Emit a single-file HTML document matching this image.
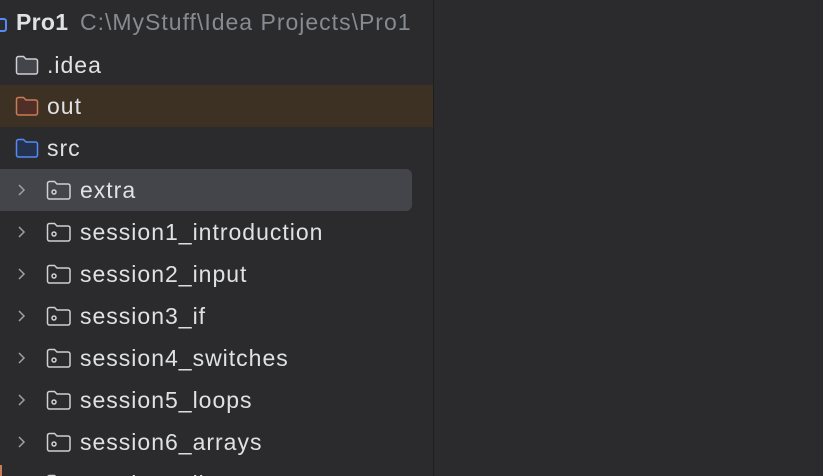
<!DOCTYPE html>
<html><head><meta charset="utf-8"><style>
html,body{margin:0;width:823px;height:476px;overflow:hidden}
body{background:#2b2b2d;font-family:"Liberation Sans",sans-serif;position:relative}
#wrap{position:absolute;left:0;top:0;width:823px;height:476px;overflow:hidden}
.div{position:absolute;left:433px;top:0;width:1px;height:476px;background:#1e1f22}
.row{position:absolute;left:0;width:433px;height:42px;color:#dfe1e5;font-size:23px;line-height:42px;letter-spacing:1px}
.row span.t{position:absolute;top:0;white-space:nowrap}
svg{position:absolute}
.sel{position:absolute;left:0;top:169px;width:412px;height:42px;background:#43454a;border-radius:0 6px 6px 0}
</style></head><body><div id="wrap">
<div class="div"></div>
<div class="row" style="top:1px;height:42px"><svg style="left:-4px;top:12px" width="14" height="24" viewBox="0 0 14 24"><rect x="0" y="6" width="10" height="12" rx="2" fill="none" stroke="#548af7" stroke-width="2"/></svg><span class="t" style="left:16px;font-weight:bold;letter-spacing:0.3px">Pro1</span><span class="t" style="left:80px;color:#868a91">C:\MyStuff\Idea Projects\Pro1</span></div>
<div class="row" style="top:44px"><svg style="left:15px;top:10px" width="24" height="22" viewBox="0 0 24 22"><path d="M1.5 4.5a2 2 0 0 1 2-2h5l2.5 2.5h9.5a2 2 0 0 1 2 2v11a2 2 0 0 1-2 2h-17a2 2 0 0 1-2-2z" fill="#43454a" stroke="#ced0d6" stroke-width="1.5"/></svg><span class="t" style="left:47px">.idea</span></div>
<div class="row" style="top:85px;background:#3d3124"><svg style="left:15px;top:10px" width="24" height="22" viewBox="0 0 24 22"><path d="M1.5 4.5a2 2 0 0 1 2-2h5l2.5 2.5h9.5a2 2 0 0 1 2 2v11a2 2 0 0 1-2 2h-17a2 2 0 0 1-2-2z" fill="#4f2f28" stroke="#c77d55" stroke-width="1.5"/></svg><span class="t" style="left:47px">out</span></div>
<div class="row" style="top:127px"><svg style="left:15px;top:10px" width="24" height="22" viewBox="0 0 24 22"><path d="M1.5 4.5a2 2 0 0 1 2-2h5l2.5 2.5h9.5a2 2 0 0 1 2 2v11a2 2 0 0 1-2 2h-17a2 2 0 0 1-2-2z" fill="#25324d" stroke="#548af7" stroke-width="1.5"/></svg><span class="t" style="left:47px">src</span></div>
<div class="sel"></div>
<div id="kids"></div>
<div style="position:absolute;left:0;top:465px;width:2px;height:11px;background:#c77d55"></div>
</div>
<script>
var names=["extra","session1_introduction","session2_input","session3_if","session4_switches","session5_loops","session6_arrays","session7_lists"];
var h="";
names.forEach(function(n,i){var top=169+42*i;var hh=Math.min(42,476-top);
h+='<div class="row" style="top:'+top+'px;height:'+hh+'px;overflow:hidden"><svg style="left:16px;top:14px" width="12" height="14" viewBox="0 0 12 14"><path d="M3 2l5 5-5 5" fill="none" stroke="#9da0a8" stroke-width="1.5"/></svg><svg style="left:46px;top:10px" width="26" height="22" viewBox="0 0 26 22"><path d="M1.5 4.5a2 2 0 0 1 2-2h5l2.5 2.5h11a2 2 0 0 1 2 2v11a2 2 0 0 1-2 2h-18.5a2 2 0 0 1-2-2z" fill="none" stroke="#ced0d6" stroke-width="1.5"/><circle cx="8" cy="13" r="2" fill="none" stroke="#ced0d6" stroke-width="1.5"/></svg><span class="t" style="left:80px">'+n+'</span></div>';});
document.getElementById("kids").innerHTML=h;
</script>
</body></html>
